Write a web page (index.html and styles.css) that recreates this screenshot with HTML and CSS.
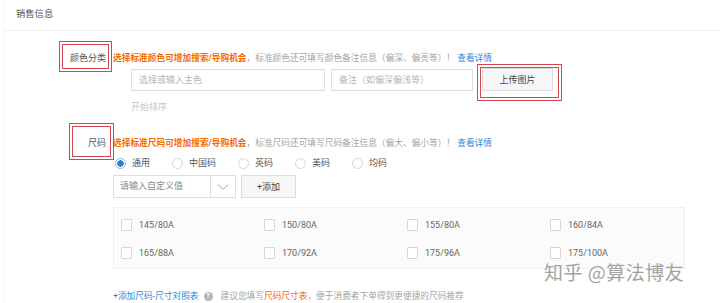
FILE: index.html
```html
<!DOCTYPE html>
<html lang="zh-CN">
<head>
    <meta charset="UTF-8">
    <title>销售信息</title>
    <link rel="stylesheet" href="styles.css">
</head>
<body>
    <div class="panel">
        <div class="panel-head">销售信息</div>
        <div class="panel-body">

            <div class="field field-color">
                <span class="mark mark-color"></span>
                <div class="field-label">颜色分类</div>
                <div class="field-main">
                    <p class="tip"><span class="hot">选择标准颜色可增加搜索/导购机会</span>，标准颜色还可填写颜色备注信息（偏深、偏亮等）！ <a class="link">查看详情</a></p>
                    <div class="color-row">
                        <div class="input input-main">选择或输入主色</div>
                        <div class="input input-note">备注（如偏深偏浅等）</div>
                        <div class="upload">
                            <span class="mark mark-upload"></span>
                            <button class="btn btn-upload">上传图片</button>
                        </div>
                    </div>
                    <div class="sort-link">开始排序</div>
                </div>
            </div>

            <div class="field field-size">
                <span class="mark mark-size"></span>
                <div class="field-label">尺码</div>
                <div class="field-main">
                    <p class="tip"><span class="hot">选择标准尺码可增加搜索/导购机会</span>，标准尺码还可填写尺码备注信息（偏大、偏小等）！ <a class="link">查看详情</a></p>
                    <div class="radio-row">
                        <label class="radio checked"><span class="radio-dot"></span>通用</label>
                        <label class="radio"><span class="radio-dot"></span>中国码</label>
                        <label class="radio"><span class="radio-dot"></span>英码</label>
                        <label class="radio"><span class="radio-dot"></span>美码</label>
                        <label class="radio"><span class="radio-dot"></span>均码</label>
                    </div>
                    <div class="custom-row">
                        <div class="select">
                            <span class="select-text">请输入自定义值</span>
                            <span class="select-arrow">
                                <svg width="12" height="8" viewBox="0 0 12 8"><path d="M1 1.5 L6 6.5 L11 1.5" fill="none" stroke="#9a9a9a" stroke-width="1"/></svg>
                            </span>
                        </div>
                        <button class="btn btn-add">+添加</button>
                    </div>
                    <div class="size-box">
                        <label class="check"><span class="check-box"></span>145/80A</label>
                        <label class="check"><span class="check-box"></span>150/80A</label>
                        <label class="check"><span class="check-box"></span>155/80A</label>
                        <label class="check"><span class="check-box"></span>160/84A</label>
                        <label class="check"><span class="check-box"></span>165/88A</label>
                        <label class="check"><span class="check-box"></span>170/92A</label>
                        <label class="check"><span class="check-box"></span>175/96A</label>
                        <label class="check"><span class="check-box"></span>175/100A</label>
                    </div>
                    <p class="size-table"><a class="link">+添加尺码-尺寸对照表</a><span class="help">?</span>建议您填写<span class="hot">尺码尺寸表</span>，便于消费者下单得到更便捷的尺码推荐</p>
                </div>
            </div>

        </div>
    </div>

    <div class="watermark">知乎 @算法博友</div>
</body>
</html>
```

FILE: styles.css
```css
body {
    margin: 0;
    background: #fff;
    font-family: Roboto, "Noto Sans CJK SC", sans-serif;
    font-size: 9px;
    color: #333;
    position: relative;
    height: 303px;
    overflow: hidden;
}
p {
    margin: 0;
}
.panel {
    margin-left: 3px;
    border-left: 1px solid #f4f4f4;
    height: 303px;
}
.panel-head {
    height: 30px;
    line-height: 28px;
    padding-left: 12px;
    border-bottom: 1px solid #efefef;
    font-size: 9.3px;
    color: #555;
}
.field {
    position: relative;
    display: flex;
    margin-left: -4px;
}
.field-color {
    margin-top: 20px;
}
.field-size {
    margin-top: 22px;
}
.field-label {
    width: 106px;
    padding-right: 7px;
    text-align: right;
    line-height: 14px;
    color: #555;
}
.field-main {
    flex: 1;
}
.tip {
    line-height: 14px;
    color: #a5a5a5;
    font-size: 8.7px;
    white-space: nowrap;
}
.hot {
    color: #f56a00;
    font-weight: bold;
}
.link {
    color: #2f88d8;
}
.mark {
    position: absolute;
    border: 1px solid #d2464c;
    outline: 1px solid #d2464c;
    outline-offset: -4px;
    pointer-events: none;
}
.mark-color {
    left: 59px;
    top: -10px;
    width: 51px;
    height: 29px;
}
.mark-size {
    left: 69px;
    top: -13px;
    width: 43px;
    height: 35px;
}
.color-row {
    display: flex;
    align-items: center;
    margin-top: 3px;
    padding-left: 18px;
}
.input {
    box-sizing: border-box;
    height: 22px;
    line-height: 20px;
    border: 1px solid #ddd;
    padding-left: 7px;
    color: #b5b5b5;
}
.input-main {
    width: 194px;
}
.input-note {
    width: 142px;
    margin-left: 6px;
}
.upload {
    position: relative;
    margin-left: 9px;
}
.mark-upload {
    left: -5px;
    top: -4px;
    width: 83px;
    height: 35px;
}
.btn {
    box-sizing: border-box;
    border: 1px solid #dcdcdc;
    background: #f6f6f8;
    font-family: inherit;
    font-size: 9px;
    color: #444;
    padding: 0;
}
.btn-upload {
    display: block;
    width: 71px;
    height: 23px;
}
.sort-link {
    margin-top: 9px;
    padding-left: 18px;
    line-height: 14px;
    color: #c8c8c8;
}
.radio-row {
    display: flex;
    margin-top: 6px;
    padding-left: 2px;
    line-height: 14px;
}
.radio {
    display: flex;
    align-items: center;
    margin-right: 22px;
    color: #555;
}
.radio-dot {
    box-sizing: border-box;
    width: 11px;
    height: 11px;
    margin-right: 6px;
    border: 1px solid #d4d4d4;
    border-radius: 50%;
    background: #fff;
}
.radio.checked .radio-dot {
    border-color: #8bb9e4;
    background: radial-gradient(circle, #2d7fd0 0 3px, #fff 3.5px);
}
.custom-row {
    display: flex;
    margin-top: 5px;
}
.select {
    box-sizing: border-box;
    display: flex;
    width: 123px;
    height: 23px;
    border: 1px solid #ddd;
}
.select-text {
    flex: 1;
    padding-left: 6px;
    line-height: 21px;
    color: #888;
}
.select-arrow {
    width: 24px;
    border-left: 1px solid #ddd;
    display: flex;
    align-items: center;
    justify-content: center;
}
.btn-add {
    width: 55px;
    height: 23px;
    margin-left: 5px;
    background: #f7f7f7;
}
.size-box {
    box-sizing: border-box;
    display: grid;
    grid-template-columns: repeat(4, 143px);
    grid-auto-rows: 28px;
    width: 572px;
    height: 62px;
    margin-top: 9px;
    padding: 3px 0 0 7px;
    border: 1px solid #f0f0f0;
    background: #fbfbfb;
}
.check {
    display: flex;
    align-items: center;
    color: #666;
}
.check-box {
    box-sizing: border-box;
    width: 11px;
    height: 12px;
    margin-right: 7px;
    border: 1px solid #d6d6d6;
    border-radius: 1px;
    background: #fff;
}
.size-table {
    margin-top: 20px;
    line-height: 14px;
    color: #a5a5a5;
    font-size: 8.7px;
    white-space: nowrap;
    display: flex;
    align-items: center;
}
.size-table .hot {
    font-weight: normal;
}
.help {
    display: inline-block;
    width: 9px;
    height: 9px;
    margin: 0 8px 0 5px;
    border-radius: 50%;
    background: #b4b4b4;
    color: #fff;
    font-size: 7px;
    line-height: 9px;
    text-align: center;
    font-weight: bold;
}
.watermark {
    position: absolute;
    left: 544px;
    top: 262px;
    font-family: "Noto Sans CJK SC", sans-serif;
    font-size: 19px;
    line-height: 19px;
    color: #a3a3a3;
    letter-spacing: 0.5px;
    white-space: nowrap;
}
```
